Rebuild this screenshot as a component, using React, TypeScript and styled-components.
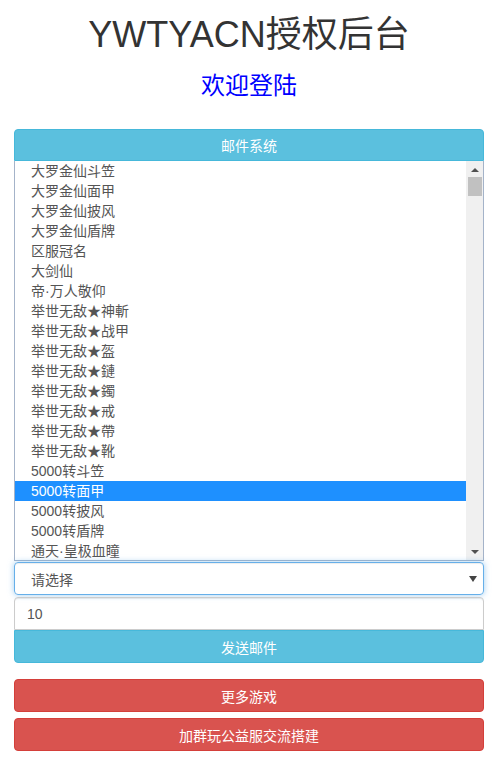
import React from "react";
import styled, { createGlobalStyle } from "styled-components";

const Global = createGlobalStyle`
  html, body { margin: 0; padding: 0; background: #fff; }
  body {
    font-family: "Liberation Sans", Arial, "Noto Sans CJK SC", sans-serif;
    font-size: 14px;
    color: #333;
  }
`;

const Page = styled.div`
  width: 499px;
  padding: 0 15px 0 14px;
  box-sizing: border-box;
  display: flex;
  flex-direction: column;
`;

const Title = styled.h1`
  margin: 15px 0 0;
  font-size: 36px;
  font-weight: 400;
  line-height: 40px;
  text-align: center;
  color: #333;
`;

const Welcome = styled.h3`
  margin: 16px 0 0;
  font-size: 24px;
  font-weight: 400;
  line-height: 30px;
  text-align: center;
  color: #0000ff;
`;

const Form = styled.div`
  margin-top: 28px;
  display: flex;
  flex-direction: column;
`;

const Btn = styled.div<{ $tone: "info" | "danger"; $round: string; $h?: number }>`
  height: ${(p) => p.$h ?? 33}px;
  display: flex;
  align-items: center;
  justify-content: center;
  color: #fff;
  font-size: 14px;
  border-radius: ${(p) => p.$round};
  background: ${(p) => (p.$tone === "info" ? "#5bc0de" : "#d9534f")};
  border: 1px solid ${(p) => (p.$tone === "info" ? "#46b8da" : "#d43f3a")};
  box-sizing: border-box;
`;

const ListBox = styled.div`
  height: 400px;
  border: 1px solid #a4b3c9;
  border-top: none;
  display: flex;
  box-sizing: border-box;
`;

const Items = styled.div`
  flex: 1;
  overflow: hidden;
`;

const Item = styled.div<{ $sel?: boolean }>`
  height: 20px;
  line-height: 20px;
  padding-left: 16px;
  font-size: 14px;
  color: ${(p) => (p.$sel ? "#fff" : "#555")};
  background: ${(p) => (p.$sel ? "#1e90ff" : "transparent")};
  white-space: nowrap;
`;

const Scroll = styled.div`
  width: 17px;
  background: #f0f0f0;
  display: flex;
  flex-direction: column;
  align-items: center;
`;

const Arrow = styled.div<{ $up?: boolean }>`
  width: 0;
  height: 0;
  margin: ${(p) => (p.$up ? "7px 0 5px" : "auto 0 6px")};
  border-left: 4px solid transparent;
  border-right: 4px solid transparent;
  ${(p) =>
    p.$up ? "border-bottom: 4px solid #505050;" : "border-top: 4px solid #505050;"}
`;

const Thumb = styled.div`
  width: 14px;
  height: 19px;
  background: #c1c1c1;
`;

const SelectBox = styled.div`
  height: 33px;
  margin-top: 1px;
  border: 1px solid #66afe9;
  border-radius: 4px;
  box-shadow: inset 0 1px 1px rgba(0, 0, 0, 0.075), 0 0 6px rgba(102, 175, 233, 0.6);
  box-sizing: border-box;
  display: flex;
  align-items: center;
  justify-content: space-between;
  padding: 0 6px 0 16px;
  color: #555;
  font-size: 14px;
`;

const Caret = styled.span`
  width: 0;
  height: 0;
  border-left: 4px solid transparent;
  border-right: 4px solid transparent;
  border-top: 6px solid #444;
`;

const Input = styled.div`
  height: 33px;
  margin-top: 2px;
  border: 1px solid #ccc;
  border-radius: 4px 4px 0 0;
  box-sizing: border-box;
  display: flex;
  align-items: center;
  padding: 0 12px;
  color: #555;
  font-size: 14px;
  box-shadow: inset 0 1px 1px rgba(0, 0, 0, 0.075);
`;

const Gap = styled.div<{ $h: number }>`
  height: ${(p) => p.$h}px;
`;

const items = [
  "大罗金仙斗笠",
  "大罗金仙面甲",
  "大罗金仙披风",
  "大罗金仙盾牌",
  "区服冠名",
  "大剑仙",
  "帝·万人敬仰",
  "举世无敌★神斬",
  "举世无敌★战甲",
  "举世无敌★盔",
  "举世无敌★鏈",
  "举世无敌★鐲",
  "举世无敌★戒",
  "举世无敌★帶",
  "举世无敌★靴",
  "5000转斗笠",
  "5000转面甲",
  "5000转披风",
  "5000转盾牌",
  "通天·皇极血瞳",
];

export default function App() {
  return (
    <>
      <Global />
      <Page>
        <Title>YWTYACN授权后台</Title>
        <Welcome>欢迎登陆</Welcome>
        <Form>
          <Btn $tone="info" $round="4px 4px 0 0" $h={32}>邮件系统</Btn>
          <ListBox>
            <Items>
              {items.map((t) => (
                <Item key={t} $sel={t === "5000转面甲"}>
                  {t}
                </Item>
              ))}
            </Items>
            <Scroll>
              <Arrow $up />
              <Thumb />
              <Arrow />
            </Scroll>
          </ListBox>
          <SelectBox>
            请选择
            <Caret />
          </SelectBox>
          <Input>10</Input>
          <Btn $tone="info" $round="0 0 4px 4px">发送邮件</Btn>
          <Gap $h={16} />
          <Btn $tone="danger" $round="4px">更多游戏</Btn>
          <Gap $h={6} />
          <Btn $tone="danger" $round="4px">加群玩公益服交流搭建</Btn>
        </Form>
      </Page>
    </>
  );
}
